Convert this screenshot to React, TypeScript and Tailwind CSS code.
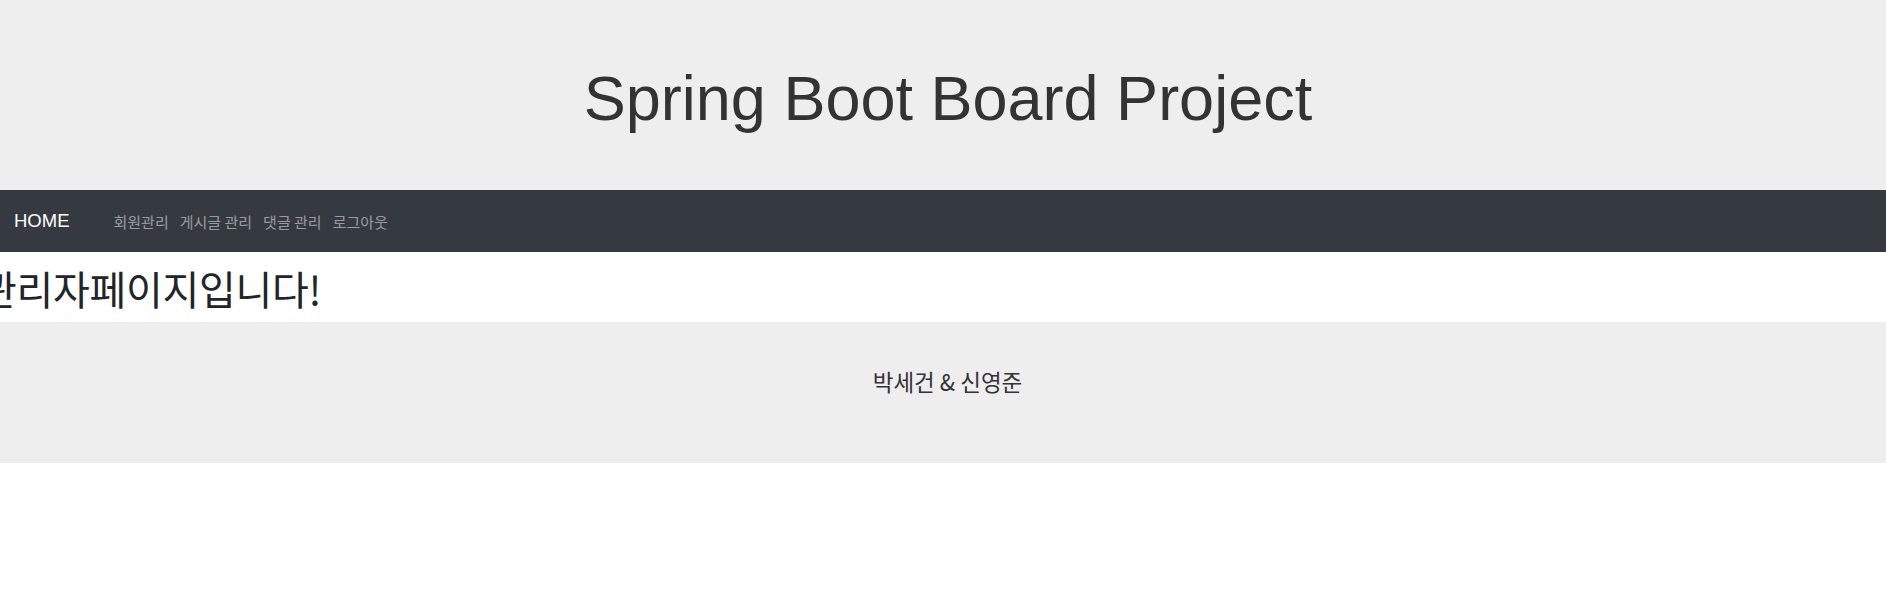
import React from "react";

export default function App() {
  const links = ["회원관리", "게시글 관리", "댓글 관리", "로그아웃"];
  return (
    <div className="w-full min-h-[616px] bg-white">
      <header className="h-[190px] bg-[#eeeeee] pt-[60px] pl-[10px] overflow-hidden">
        <h1 className="text-center text-[63px] leading-[76px] text-[#333333] font-normal font-['Liberation_Sans',Arial,sans-serif]">
          Spring Boot Board Project
        </h1>
      </header>
      <nav className="h-[62px] bg-[#343a40] flex items-center">
        <a className="ml-[14px] text-[18.5px] text-white leading-none font-['Liberation_Sans',Arial,sans-serif]">
          HOME
        </a>
        <ul className="flex items-center ml-[44px] gap-[11px] text-[15px] text-white/50 font-['Noto_Sans_CJK_KR','Liberation_Sans',sans-serif]">
          {links.map((l) => (
            <li key={l} className="leading-none">
              {l}
            </li>
          ))}
        </ul>
      </nav>
      <div className="h-[70px] overflow-hidden pt-[12px]">
        <h2 className="ml-[-20px] text-[40px] leading-[48px] tracking-[-0.3px] text-[#212529] font-normal whitespace-nowrap font-['Noto_Sans_CJK_KR','Liberation_Sans',sans-serif]">
          관리자페이지입니다!
        </h2>
      </div>
      <footer className="h-[141px] bg-[#eeeeee] pt-[43px] pl-[9px]">
        <p className="text-center text-[22.5px] leading-[33px] text-[#333333] font-['Noto_Sans_CJK_KR','Liberation_Sans',sans-serif]">
          박세건 &amp; 신영준
        </p>
      </footer>
    </div>
  );
}
